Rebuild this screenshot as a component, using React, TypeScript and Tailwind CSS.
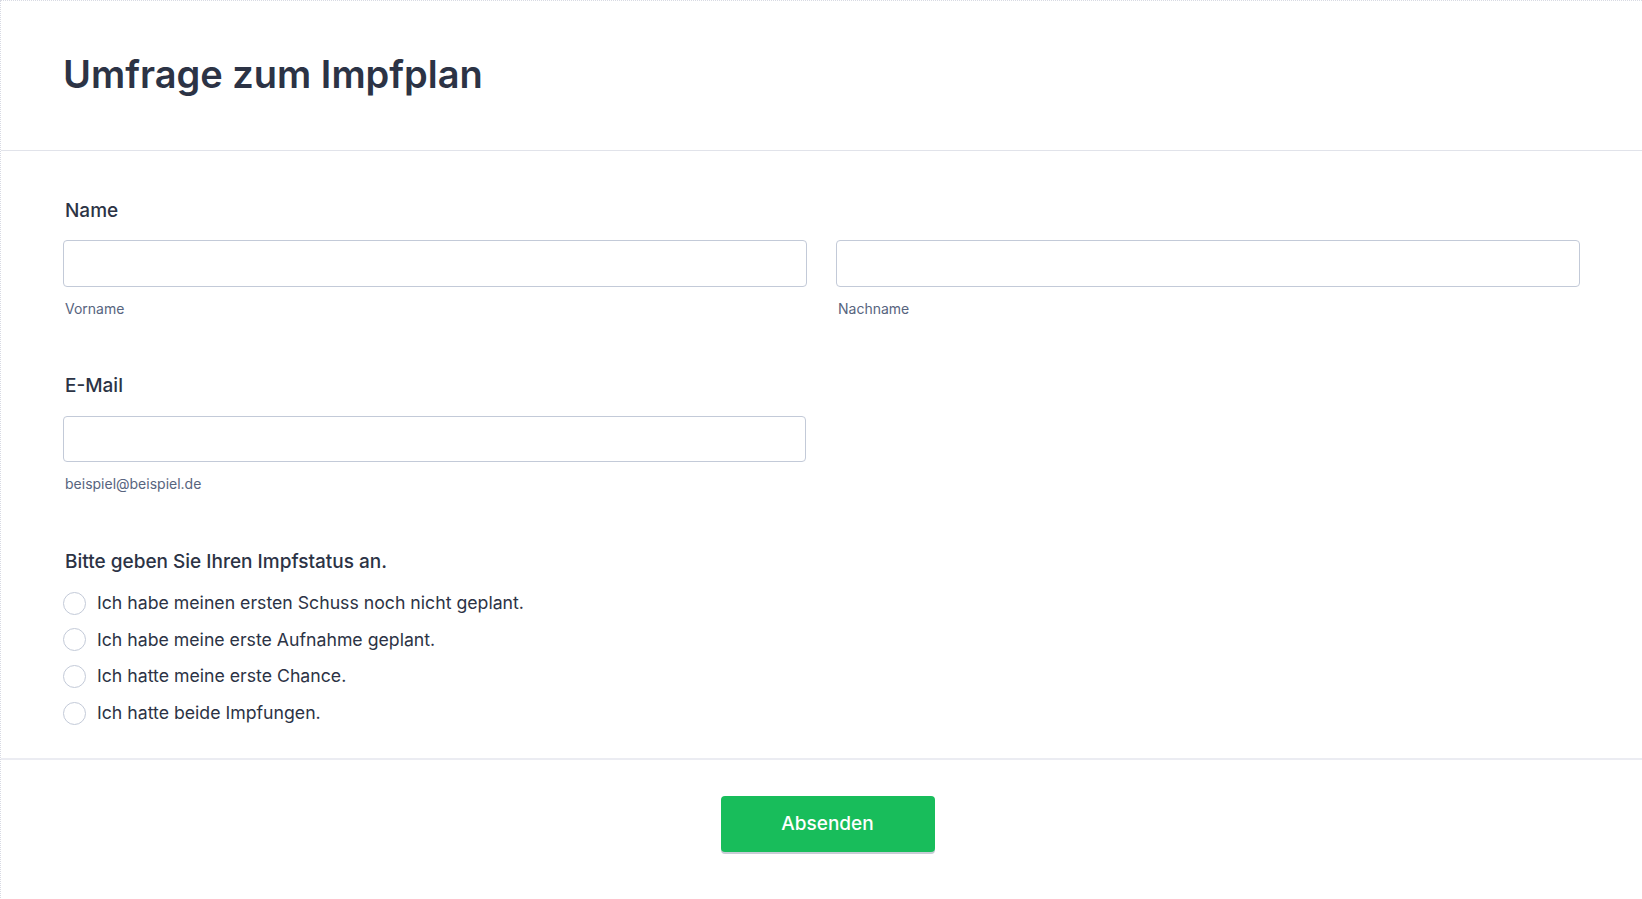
import React from 'react';

const options = [
  'Ich habe meinen ersten Schuss noch nicht geplant.',
  'Ich habe meine erste Aufnahme geplant.',
  'Ich hatte meine erste Chance.',
  'Ich hatte beide Impfungen.',
];

export default function App() {
  return (
    <div
      className="min-h-screen bg-white text-[#2c3345] border-l border-t border-dotted border-[#d8dae3]"
      style={{ fontFamily: 'Inter, "Noto Sans", sans-serif' }}
    >
      <header className="h-[150px] flex items-center px-[62px] border-b border-[#e1e3ea]">
        <h1 className="text-[38px] font-semibold leading-none -mt-[3px]">Umfrage zum Impfplan</h1>
      </header>

      <form className="px-[62px] pt-[48px]" onSubmit={(e) => e.preventDefault()}>
        {/* name */}
        <div>
          <label className="block text-[19px] font-medium leading-[24px] pl-[2px]">Name</label>
          <div className="grid grid-cols-2 gap-[29px] mt-[17px]">
            <div>
              <input className="w-full h-[47px] rounded-[4px] border border-[#c3cad8] bg-white outline-none" />
              <div className="mt-[13px] text-[14px] leading-[18px] text-[#57647e] pl-[2px]">Vorname</div>
            </div>
            <div>
              <input className="w-full h-[47px] rounded-[4px] border border-[#c3cad8] bg-white outline-none" />
              <div className="mt-[13px] text-[14px] leading-[18px] text-[#57647e] pl-[2px]">Nachname</div>
            </div>
          </div>
        </div>

        {/* email */}
        <div className="mt-[56px]">
          <label className="block text-[19px] font-medium leading-[24px] pl-[2px]">E-Mail</label>
          <div className="grid grid-cols-2 gap-[29px] mt-[18px]">
            <div>
              <input type="email" className="w-[743px] h-[46px] rounded-[4px] border border-[#c3cad8] bg-white outline-none" />
              <div className="mt-[13px] text-[14px] leading-[18px] text-[#57647e] pl-[2px]">beispiel@beispiel.de</div>
            </div>
          </div>
        </div>

        {/* radio */}
        <div className="mt-[57px] pb-[27px]">
          <div className="text-[19px] font-medium leading-[24px] pl-[2px]">Bitte geben Sie Ihren Impfstatus an.</div>
          <div className="mt-[11px] flex flex-col">
            {options.map((o) => (
              <label key={o} className="flex items-center h-[36.6px] gap-[11px] cursor-pointer">
                <span className="w-[23px] h-[23px] rounded-full border border-[#c3cad8] bg-white shrink-0" />
                <span className="text-[17.7px] leading-[24px]">{o}</span>
              </label>
            ))}
          </div>
        </div>
      </form>

      <div className="border-t-2 border-[#ebecf2] flex justify-center pt-[36px] pb-[48px] pl-[12px]">
        <button
          type="button"
          className="w-[214px] h-[56px] rounded-[4px] bg-[#18bd5b] text-white text-[19px] font-medium shadow-[0_2px_0_#c8ccd6]"
        >
          Absenden
        </button>
      </div>
    </div>
  );
}
